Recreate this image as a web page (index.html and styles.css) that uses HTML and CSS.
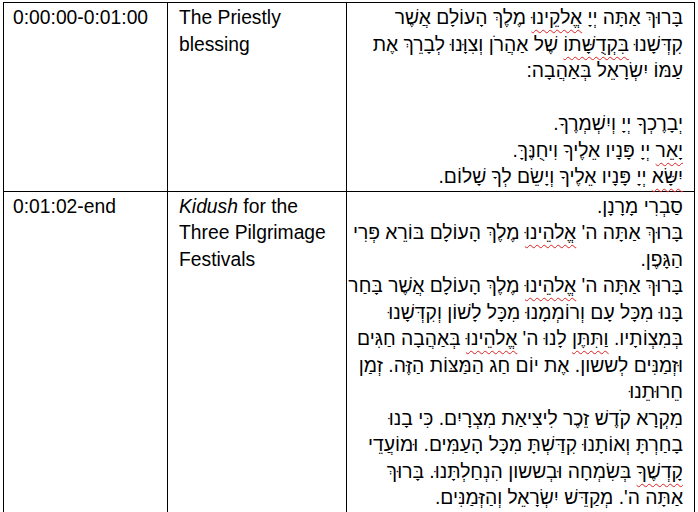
FILE: index.html
```html
<!DOCTYPE html>
<html lang="en">
<head>
<meta charset="utf-8">
<title>Segments</title>
<link rel="stylesheet" href="styles.css">
</head>
<body>
<table class="grid">
  <colgroup>
    <col class="c-time">
    <col class="c-title">
    <col class="c-text">
  </colgroup>
  <tr class="row-one">
    <td class="time">0:00:00-0:01:00</td>
    <td class="title">The Priestly<br>blessing</td>
    <td class="heb" dir="rtl" lang="he">
      <div class="ln">בָּרוּךְ אַתָּה יְיָ <span class="sp">אֱלקֵינוּ</span> מֶלֶךְ הָעוֹלָם אֲשֶׁר</div>
      <div class="ln">קִדְּשָׁנוּ <span class="sp">בִּקְדֻשָּׁתוֹ</span> שֶׁל אַהֲרֹן וְצִוָּנוּ לְבָרֵךְ אֶת</div>
      <div class="ln">עַמּוֹ יִשְׂרָאֵל בְּאַהֲבָה:</div>
      <div class="ln">&nbsp;</div>
      <div class="ln">יְבָרֶכְךָ יְיָ וְיִשְׁמְרֶךָ.</div>
      <div class="ln"><span class="sp">יָאֵר</span> יְיָ פָּנָיו אֵלֶיךָ וִיחֻנֶּךָּ.</div>
      <div class="ln"><span class="sp">יִשָּׂא</span> יְיָ פָּנָיו אֵלֶיךָ וְיָשֵׂם לְךָ שָׁלוֹם.</div>
    </td>
  </tr>
  <tr class="row-two">
    <td class="time">0:01:02-end</td>
    <td class="title"><em>Kidush</em> for the<br>Three Pilgrimage<br>Festivals</td>
    <td class="heb" dir="rtl" lang="he">
      <div class="ln">סַבְרִי מָרָנָן.</div>
      <div class="ln">בָּרוּךְ אַתָּה ה' <span class="sp">אֱלהֵינוּ</span> מֶלֶךְ הָעוֹלָם בּוֹרֵא פְּרִי</div>
      <div class="ln">הַגָּפֶן.</div>
      <div class="ln">בָּרוּךְ אַתָּה ה' <span class="sp">אֱלהֵינוּ</span> מֶלֶךְ הָעוֹלָם אֲשֶׁר בָּחַר</div>
      <div class="ln">בָּנוּ מִכָּל עָם וְרוֹמְמָנוּ מִכָּל לָשׁוֹן וְקִדְּשָׁנוּ</div>
      <div class="ln">בְּמִצְוֹתָיו. <span class="sp">וַתִּתֶּן</span> לָנוּ ה' <span class="sp">אֱלהֵינוּ</span> בְּאַהֲבָה חַגִּים</div>
      <div class="ln">וּזְמַנִּים לְששון. אֶת יוֹם חַג הַמַּצּוֹת הַזֶּה. זְמַן</div>
      <div class="ln">חֵרוּתֵנוּ</div>
      <div class="ln">מִקְרָא קֹדֶשׁ זֵכֶר לִיצִיאַת מִצְרָיִם. כִּי בָנוּ</div>
      <div class="ln">בָחַרְתָּ וְאוֹתָנוּ קִדַּשְׁתָּ מִכָּל הָעַמִּים. וּמוֹעֲדֵי</div>
      <div class="ln"><span class="sp">קָדְשֶׁךָ</span> בְּשִׂמְחָה וּבְששון הִנְחַלְתָּנוּ. בָּרוּךְ</div>
      <div class="ln">אַתָּה ה'. מְקַדֵּשׁ יִשְׂרָאֵל וְהַזְּמַנִּים.</div>
    </td>
  </tr>
</table>
</body>
</html>
```
FILE: styles.css
```css
html, body {
  margin: 0;
  padding: 0;
  background: #ffffff;
}

body {
  padding: 2px 0 0 3px;
  font-family: "Liberation Sans", Arial, sans-serif;
  font-size: 19.3px;
  line-height: 26.5px;
  color: #000000;
}

.grid {
  border-collapse: collapse;
  table-layout: fixed;
  width: 691px;
}

.c-time { width: 164px; }
.c-title { width: 179px; }
.c-text { width: 348px; }

.grid td {
  border: 1px solid #000000;
  vertical-align: top;
  padding: 2px 0 0 0;
}

.time {
  padding-left: 9px !important;
}

.title {
  padding-left: 11px !important;
}

.heb {
  padding-right: 11px !important;
  text-align: right;
}

.ln {
  white-space: nowrap;
}

.sp {
  text-decoration: underline wavy #e02020;
  text-decoration-thickness: 1px;
  text-underline-offset: 5px;
}

em {
  font-style: italic;
}
```
